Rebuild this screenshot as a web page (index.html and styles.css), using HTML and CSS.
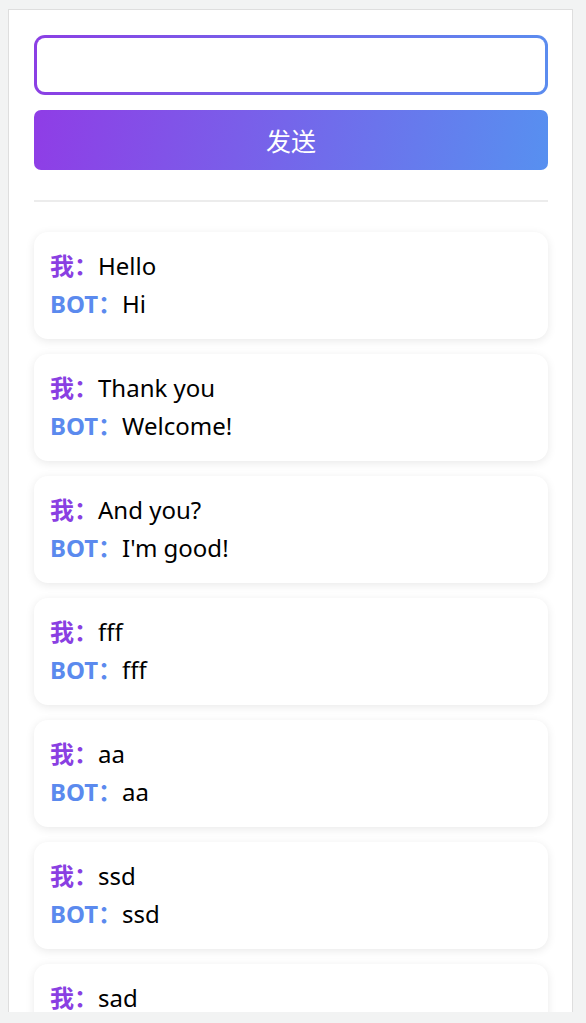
FILE: index.html
```html
<!DOCTYPE html>
<html lang="zh">
<head>
<meta charset="utf-8">
<title>Chat</title>
<link rel="stylesheet" href="styles.css">
</head>
<body>
<div class="app">
  <input class="msg-input" type="text">
  <button class="send-btn">发送</button>
  <hr class="divider">
  <div class="history">
    <div class="card"><div class="line"><span class="me">我：</span>Hello</div><div class="line"><span class="bot">BOT：</span>Hi</div></div>
    <div class="card"><div class="line"><span class="me">我：</span>Thank you</div><div class="line"><span class="bot">BOT：</span>Welcome!</div></div>
    <div class="card"><div class="line"><span class="me">我：</span>And you?</div><div class="line"><span class="bot">BOT：</span>I'm good!</div></div>
    <div class="card"><div class="line"><span class="me">我：</span>fff</div><div class="line"><span class="bot">BOT：</span>fff</div></div>
    <div class="card"><div class="line"><span class="me">我：</span>aa</div><div class="line"><span class="bot">BOT：</span>aa</div></div>
    <div class="card"><div class="line"><span class="me">我：</span>ssd</div><div class="line"><span class="bot">BOT：</span>ssd</div></div>
    <div class="card"><div class="line"><span class="me">我：</span>sad</div><div class="line"><span class="bot">BOT：</span>sad</div></div>
  </div>
</div>
</body>
</html>
```
FILE: styles.css
```css
html, body {
  margin: 0;
  background: #f2f3f3;
}
body {
  padding: 9px 0 0 8px;
  font-family: "Noto Sans", "Noto Sans CJK SC", sans-serif;
}
.app {
  box-sizing: border-box;
  width: 565px;
  height: 1003px;
  overflow: hidden;
  background: #fff;
  border: 1px solid #dedede;
  border-bottom: none;
  padding: 25px 24px 0 25px;
  display: flex;
  flex-direction: column;
}
.msg-input {
  box-sizing: border-box;
  display: block;
  flex-shrink: 0;
  width: 100%;
  height: 60px;
  margin: 0;
  border: 3px solid transparent;
  border-radius: 11px;
  background: linear-gradient(#fff, #fff) padding-box,
              linear-gradient(90deg, #8b3fe4, #5b8cef) border-box;
  outline: none;
  font-size: 20px;
  padding: 0 14px;
}
.send-btn {
  display: block;
  width: 100%;
  height: 60px;
  margin: 15px 0 0;
  border: none;
  border-radius: 7px;
  background: linear-gradient(100deg, #8f3de6 0%, #7a5ee9 40%, #5790f0 100%);
  color: #fff;
  font-family: "Noto Sans CJK SC", sans-serif;
  font-size: 25px;
  flex-shrink: 0;
}
.divider {
  margin: 30px 0;
  border: none;
  height: 2px;
  background: #ececec;
  flex-shrink: 0;
}
.history {
  display: flex;
  flex-direction: column;
  gap: 15px;
}
.card {
  flex-shrink: 0;
  background: #fff;
  border-radius: 14px;
  box-shadow: 0 2px 10px rgba(0, 0, 0, 0.09);
  padding: 15px 16px 16px;
}
.line {
  font-size: 24px;
  line-height: 38px;
  color: #000;
}
.me {
  color: #8a3fe2;
  font-weight: bold;
}
.bot {
  color: #5b8aee;
  font-weight: bold;
}
```
